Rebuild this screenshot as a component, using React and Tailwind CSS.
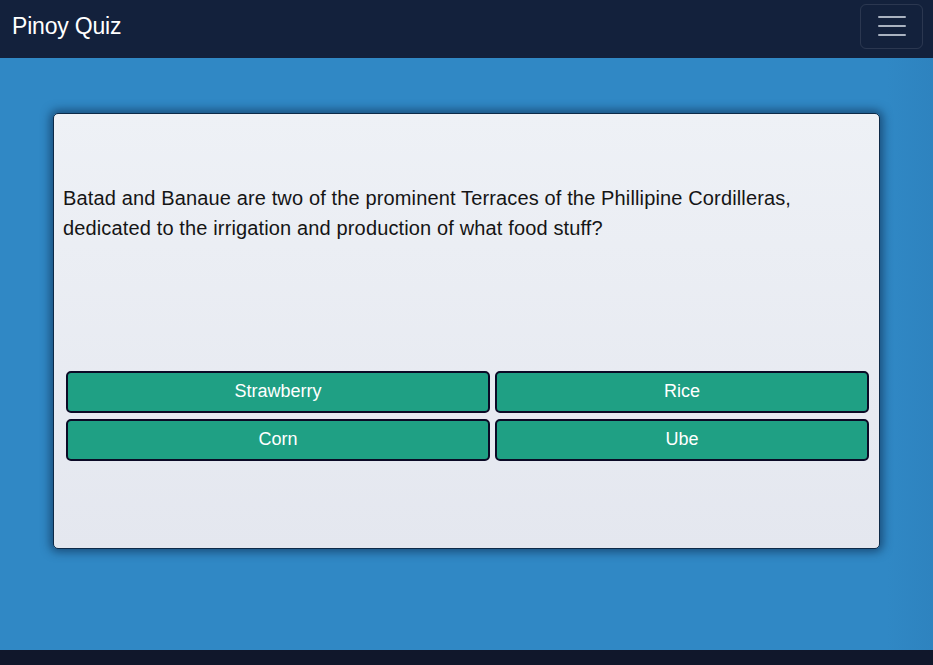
export default function App() {
  const answers = ["Strawberry", "Rice", "Corn", "Ube"];
  return (
    <div className="w-[933px] h-[665px] flex flex-col overflow-hidden" style={{ fontFamily: '"Liberation Sans", Arial, sans-serif' }}>
      <header className="h-[58px] shrink-0 bg-[#13213c] flex items-center justify-between pl-3 pr-[10px]">
        <span className="text-white text-[23px] leading-none tracking-[-0.2px] mt-[-6px]">Pinoy Quiz</span>
        <button className="w-[63px] h-[45px] mt-[-6px] rounded-[6px] border border-white/10 flex flex-col items-center justify-center gap-[7px]">
          <span className="block w-[28px] h-[2px] bg-[#a9b2c0] rounded"></span>
          <span className="block w-[28px] h-[2px] bg-[#a9b2c0] rounded"></span>
          <span className="block w-[28px] h-[2px] bg-[#a9b2c0] rounded"></span>
        </button>
      </header>
      <main className="flex-1 bg-[linear-gradient(to_right,#3088c5_95%,#2e83bf)] pt-[55px] px-[53px]">
        <div className="h-[436px] rounded-[5px] border border-[#0d2a48] bg-[linear-gradient(to_bottom,#eef1f6,#e4e7ef)] shadow-[0_0_10px_3px_rgba(8,30,60,0.55)] pt-[69px] pl-[9px] pr-[11px]">
          <p className="text-[20px] leading-[30px] text-[#151515] tracking-[0.14px] pr-[30px]">
            Batad and Banaue are two of the prominent Terraces of the Phillipine Cordilleras, dedicated to the irrigation and production of what food stuff?
          </p>
          <div className="mt-[128px] ml-[3px] grid grid-cols-[424px_374px] gap-x-[5px] gap-y-[6px]">
            {answers.map((a) => (
              <button key={a} className="h-[42px] pb-[2px] rounded-[5px] border-2 border-[#0b0a26] bg-[#1fa084] text-white text-[18px] flex items-center justify-center">
                {a}
              </button>
            ))}
          </div>
        </div>
      </main>
      <footer className="h-[15px] shrink-0 bg-[#10172b]"></footer>
    </div>
  );
}
